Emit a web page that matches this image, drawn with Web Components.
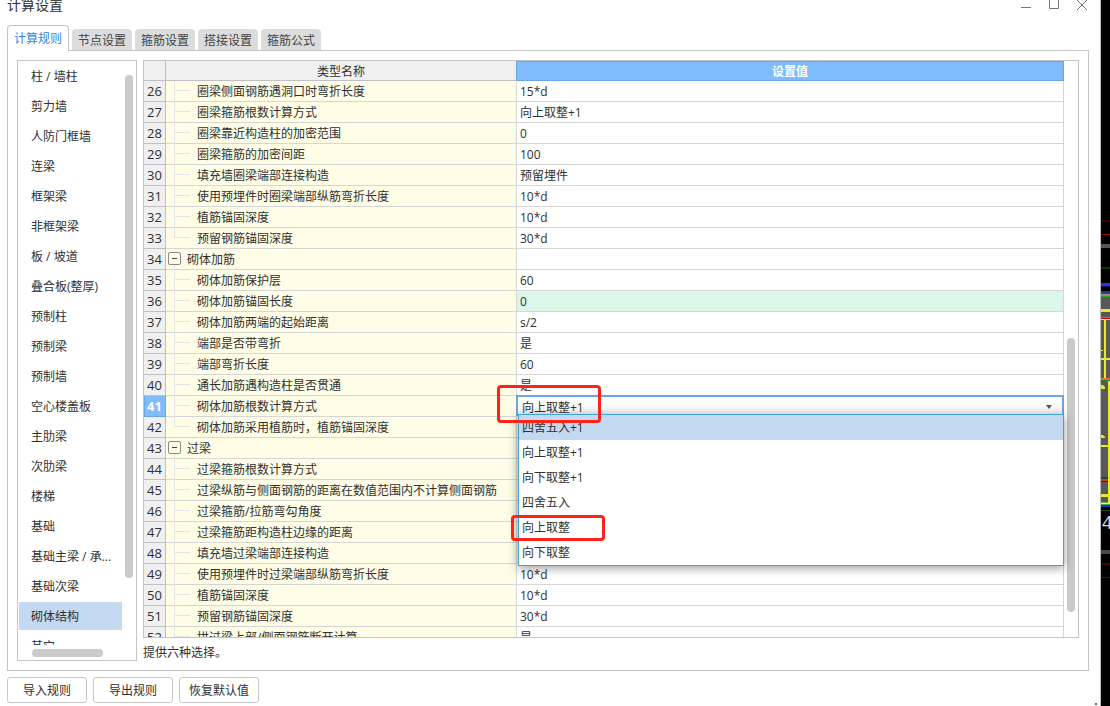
<!DOCTYPE html>
<html lang="zh-CN">
<head>
<meta charset="utf-8">
<title>计算设置</title>
<style>
  html, body { margin: 0; height: 100%; }
  body {
    --line: #c4c4c8; --grid: #d6d6d6; --accent: #80bbfb; --accent-line: #68a6e8;
    --select: #c3d9f1; --thumb: #cacaca;
    display: flex; overflow: hidden; background: #000; color: #303030;
    font: 12px/20px "Open Sans", "Noto Sans CJK SC", sans-serif;
  }
</style>
</head>
<body>
<settings-window caption="计算设置"></settings-window>
<canvas-strip></canvas-strip>

<script>
class Base extends HTMLElement {
  constructor() { super(); this.attachShadow({ mode: "open" }); }
  connectedCallback() { this.shadowRoot.innerHTML = `<style>*{box-sizing:border-box}${this.css()}</style>${this.html()}`; }
}

customElements.define("title-bar", class extends Base {
  css() { return `
    :host { display: flex; justify-content: space-between; height: 25px; padding: 0 12px 0 7px; }
    h1 { margin: 0; font-size: 14px; font-weight: 400; line-height: 10px; }
    nav { display: flex; gap: 16px; height: 12px; }
    button { display: block; width: 12px; height: 12px; padding: 0; border: 0; background: none; }
    svg { display: block; stroke: #777; fill: none; }`; }
  html() { return `<h1><slot></slot></h1>
    <nav>
      <button aria-label="最小化"><svg width="12" height="12"><path d="M1 7.5h10"/></svg></button>
      <button aria-label="最大化"><svg width="12" height="12"><path d="M1.5 0v8.5h9V0"/></svg></button>
      <button aria-label="关闭"><svg width="12" height="12"><path d="M1 0l10 10M11 0L1 10"/></svg></button>
    </nav>`; }
});

customElements.define("tab-strip", class extends Base {
  css() { return `
    :host { display: flex; align-items: flex-end; gap: 3px; height: 26px; position: relative; z-index: 1; }
    button { height: 21px; width: 60px; margin: 0 0 1px; padding: 2px 0 0; border: 0; border-radius: 4px 4px 0 0; background: #dcdcdc; color: #444; font: inherit; }
    button[aria-selected=true] { width: 62px; height: 26px; margin: 0; padding: 0; border: 1px solid var(--line); border-bottom: 0; border-radius: 4px 4px 0 0; background: #fff; color: #3585e0; }`; }
  html() { return this.getAttribute("items").split(",").map((t, i) => `<button role="tab" aria-selected="${i === 0}">${t}</button>`).join(""); }
});

customElements.define("category-list", class extends Base {
  css() { return `
    :host { display: flex; flex-direction: column; position: relative; width: 120px; border: 1px solid var(--line); padding: 1px; }
    ul { flex: 1; min-height: 0; overflow: hidden; list-style: none; margin: 0 13px 14px 0; padding: 0; }
    li { height: 28px; margin-bottom: 2px; padding: 0 0 0 12px; line-height: 30px; white-space: nowrap; }
    li[aria-selected=true] { background: var(--select); }
    .v, .h { position: absolute; border-radius: 4px; background: var(--thumb); }
    .v { right: 3px; top: 14px; width: 8px; bottom: 82px; }
    .h { left: 14px; bottom: 3px; width: 71px; height: 8px; }`; }
  html() {
    const items = ["柱 / 墙柱","剪力墙","人防门框墙","连梁","框架梁","非框架梁","板 / 坡道","叠合板(整厚)","预制柱","预制梁","预制墙","空心楼盖板","主肋梁","次肋梁","楼梯","基础","基础主梁 / 承...","基础次梁","砌体结构","其它"];
    return `<ul role="listbox">${items.map(t => `<li role="option" aria-selected="${t === "砌体结构"}">${t}</li>`).join("")}</ul><div class="v"></div><div class="h"></div>`;
  }
});

customElements.define("choice-cell", class extends Base {
  css() { return `
    :host { display: block; position: relative; }
    select { display: block; appearance: none; width: 100%; height: 21px; margin: 0; padding: 2px 4px 0; border: 2px solid var(--accent-line); background: linear-gradient(#fff, #f7f7f7); color: inherit; font: inherit; line-height: 17px; outline: 0; }
    svg { position: absolute; right: 12px; top: 10px; fill: #556; }
    ul { position: absolute; z-index: 2; left: 2px; right: 0; top: 19px; margin: 0; padding: 0; list-style: none; border: 1px solid #3fa5cf; background: #fff; box-shadow: 0 2px 10px rgba(0,0,0,.4); }
    li { height: 25px; padding-left: 3px; line-height: 25px; }
    li[aria-selected=true] { background: var(--select); }
    i { position: absolute; z-index: 3; border: 3px solid #ff2317; border-radius: 4px; }
    .a { left: -19px; top: -10px; width: 104px; height: 38px; }
    .b { left: -5px; top: 120px; width: 94px; height: 26px; }`; }
  html() {
    const o = ["四舍五入+1","向上取整+1","向下取整+1","四舍五入","向上取整","向下取整"];
    return `<select aria-label="砌体加筋根数计算方式">${o.map((t, i) => `<option${i === 1 ? " selected" : ""}>${t}</option>`).join("")}</select>
      <svg width="6" height="4"><path d="M0 0h6L3 4z"/></svg>
      <ul role="listbox">${o.map((t, i) => `<li role="option" aria-selected="${i === 0}">${t}</li>`).join("")}</ul>
      <i class="a"></i><i class="b"></i>`;
  }
});

customElements.define("rule-table", class extends Base {
  css() { return `
    :host { display: flex; position: relative; min-height: 0; border: 1px solid var(--line); padding-right: 14px; overflow: hidden; }
    table { width: 100%; height: max-content; border-collapse: separate; border-spacing: 0; table-layout: fixed; }
    th, td { height: 21px; padding: 0; border: 0 solid var(--grid); border-width: 0 1px 1px 0; font-weight: 400; text-align: left; line-height: 20px; white-space: nowrap; }
    td { padding-top: 2px; line-height: 18px; }
    thead th { height: 20px; padding-top: 2px; border-color: #c0c0c4; background: #f0f0f0; line-height: 17px; text-align: center; }
    thead th:nth-child(2) { border-right-color: var(--accent-line); }
    thead th:last-child { border-color: var(--accent-line); background: var(--accent); box-shadow: inset 0 1px var(--accent-line); color: #fff; font-weight: 700; }
    tbody th { border-color: #c0c0c4; background: #f0f0f0; text-align: center; font-size: 13px; }
    tbody th.on { border-color: var(--accent-line); background: var(--accent); box-shadow: inset 1px 0 var(--accent-line); color: #fff; font-weight: 700; }
    .name { position: relative; background: #fffde6; padding-left: 31px; }
    .name::before { content: ""; position: absolute; left: 8px; top: 0; bottom: -1px; width: 16px; border-left: 1px solid #e4e4e8; }
    .name::after { content: ""; position: absolute; left: 8px; top: 9px; width: 16px; border-top: 1px solid #e4e4e8; }
    .last::before { bottom: 10px; }
    .group { padding-left: 21px; }
    .group::before { top: 15px; }
    .group::after { content: none; }
    .name button { position: absolute; left: 2px; top: 3px; width: 13px; height: 13px; padding: 0; border: 1px solid #8a8a8a; border-radius: 2px; background: #fffde6; }
    .name button::before { content: ""; display: block; width: 5px; height: 1px; margin: 0 auto; background: #444; }
    .value { padding-left: 3px; }
    .calc { background: #dcf6ea; }
    .edit { padding: 0; vertical-align: top; line-height: 20px; }
    .edit choice-cell { margin: -1px; }
    .bar { position: absolute; right: 3px; bottom: 25px; width: 8px; height: 274px; border-radius: 4px; background: var(--thumb); }`; }
  html() {
    const rows = [
      ["圈梁侧面钢筋遇洞口时弯折长度","15*d"],["圈梁箍筋根数计算方式","向上取整+1"],["圈梁靠近构造柱的加密范围","0"],["圈梁箍筋的加密间距","100"],
      ["填充墙圈梁端部连接构造","预留埋件"],["使用预埋件时圈梁端部纵筋弯折长度","10*d"],["植筋锚固深度","10*d"],["预留钢筋锚固深度","30*d","last"],
      ["砌体加筋","","group"],["砌体加筋保护层","60"],["砌体加筋锚固长度","0","","calc"],["砌体加筋两端的起始距离","s/2"],["端部是否带弯折","是"],["端部弯折长度","60"],
      ["通长加筋遇构造柱是否贯通","是"],["砌体加筋根数计算方式",null],["砌体加筋采用植筋时，植筋锚固深度","","last"],
      ["过梁","","group"],["过梁箍筋根数计算方式",""],["过梁纵筋与侧面钢筋的距离在数值范围内不计算侧面钢筋",""],["过梁箍筋/拉筋弯勾角度",""],["过梁箍筋距构造柱边缘的距离",""],
      ["填充墙过梁端部连接构造",""],["使用预埋件时过梁端部纵筋弯折长度","10*d"],["植筋锚固深度","10*d"],["预留钢筋锚固深度","30*d"],["拱过梁上部/侧面钢筋断开计算","是"]
    ];
    return `<table><colgroup><col style="width:22px"><col style="width:351px"><col></colgroup>
      <thead><tr><th></th><th>类型名称</th><th>设置值</th></tr></thead>
      <tbody>${rows.map(([n, v, k = "", c = ""], i) => `<tr><th scope="row"${v === null ? ' class="on"' : ""}>${26 + i}</th>
        <td class="name ${k}">${k === "group" ? `<button aria-label="折叠${n}"></button>` : ""}${n}</td>
        ${v === null ? `<td class="edit"><choice-cell></choice-cell></td>` : `<td class="value ${c}">${v}</td>`}</tr>`).join("")}</tbody></table>
      <div class="bar"></div>`;
  }
});

customElements.define("push-button", class extends Base {
  css() { return `
    :host { display: block; }
    button { width: 80px; height: 26px; padding: 2px 0 0; border: 1px solid #c8c8c8; border-radius: 3px; background: #fff; color: inherit; font: inherit; }`; }
  html() { return `<button><slot></slot></button>`; }
});

customElements.define("settings-window", class extends Base {
  css() { return `
    :host { display: flex; flex-direction: column; flex: 1; min-width: 0; height: 100vh; position: relative; background: #fff; border-right: 1px solid #bbb; }
    main { display: flex; flex-direction: column; flex: 1; min-height: 0; padding: 0 11px 0 7px; }
    .panel { display: flex; flex: 1; min-height: 0; gap: 6px; margin-top: -1px; padding: 9px; border: 1px solid var(--line); }
    .right { display: flex; flex-direction: column; flex: 1; min-width: 0; }
    rule-table { flex: 1; }
    p { margin: 5px 0 0; height: 18px; line-height: 20px; }
    footer { display: flex; gap: 6px; padding: 6px 0 3px 7px; }
    .grip { position: absolute; right: 3px; bottom: 1px; width: 2px; height: 2px; background: #667; }`; }
  html() { return `<title-bar>${this.getAttribute("caption")}</title-bar>
    <main>
      <tab-strip role="tablist" items="计算规则,节点设置,箍筋设置,搭接设置,箍筋公式"></tab-strip>
      <div class="panel"><category-list></category-list>
        <div class="right"><rule-table></rule-table><p>提供六种选择。</p></div></div>
    </main>
    <footer><push-button>导入规则</push-button><push-button>导出规则</push-button><push-button>恢复默认值</push-button></footer>
    <div class="grip"></div>`; }
});

customElements.define("canvas-strip", class extends Base {
  css() { return `:host { display: block; width: 9px; background: #000; overflow: hidden; } svg { display: block; }`; }
  html() {
    // [y, height, colour] bands across the strip, then partial marks
    const bands = [[220,2,"#400004"],[234,1,"#a00008"],[244,4,"#555"],[267,2,"#003c00"],[283,3,"#3030e8"],[286,1,"#101060"],[291,2,"#1c3c90"],[293,1,"#286028"],[294,2,"#b08078"],[296,1,"#20b020"],
      [297,205,"#585858"],[309,3,"#e8e828"],[317,1,"#30b030"],[318,1,"#e00000"],[319,1,"#e8e0b0"],[358,2,"#e8e828"],[378,2,"#f06848"],[380,1,"#208020"],[445,2,"#e8e828"],[477,2,"#205020"],[479,2,"#d84010"],[481,1,"#402010"],[494,3,"#e8e828"],
      [502,1,"#50c050"],[503,1,"#e0f0d0"],[504,1,"#50a050"],[505,2,"#2828c8"],[510,1,"#005000"],[550,4,"#484848"],[563,2,"#400004"],[577,1,"#700008"]];
    return `<svg width="9" height="706" aria-hidden="true">${bands.map(([y, h, c]) => `<path fill="${c}" d="M0 ${y}h9v${h}H0z"/>`).join("")}
      <path fill="#e8e828" d="M3 320h2v58H3zM7 381h2v122H7zM0 350h2v1H0zM0 385h2l2 2v2H0zM0 435h2l2 2v1H0z"/>
      <text x="1" y="529" font-size="18" fill="#ddd">4</text></svg>`;
  }
});
</script>
</body>
</html>
